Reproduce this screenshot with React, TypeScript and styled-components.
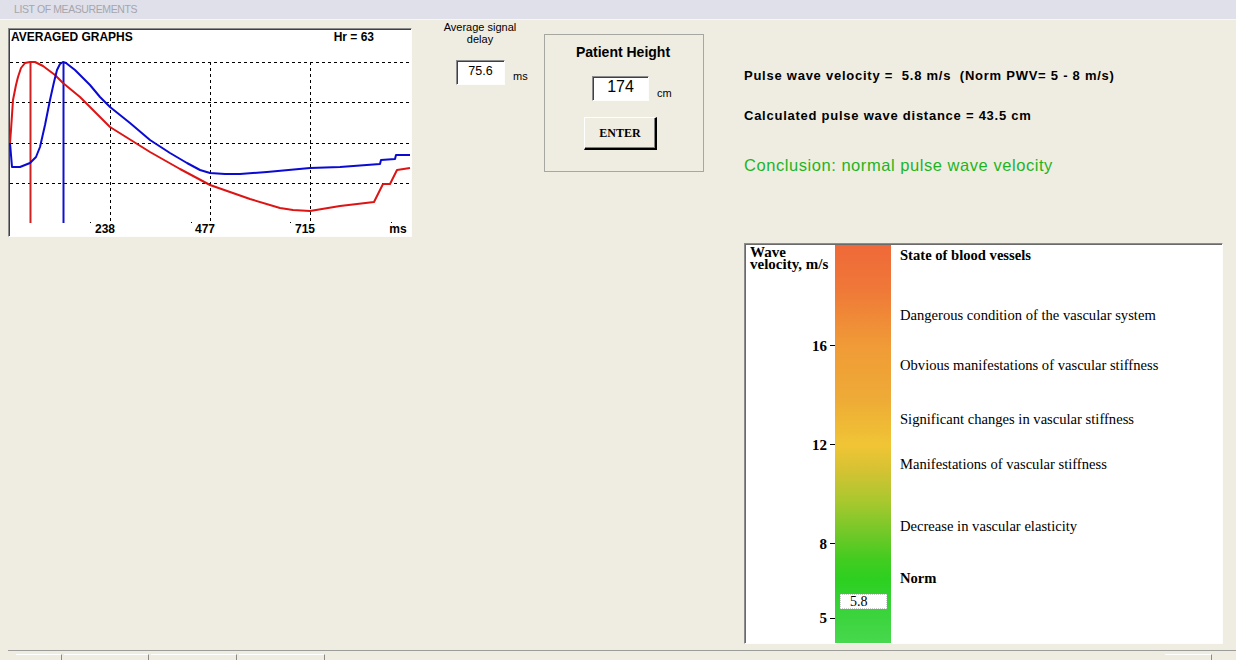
import styled, { createGlobalStyle } from "styled-components";

const GlobalStyle = createGlobalStyle`
  html, body {
    margin: 0;
    padding: 0;
  }
  body {
    background: #efede2;
    font-family: "Liberation Sans", Arial, sans-serif;
    color: #000;
    overflow: hidden;
  }
`;

const Page = styled.div`
  width: 1236px;
  height: 660px;
  display: flex;
  flex-direction: column;
`;

const TopBar = styled.div`
  flex: none;
  height: 19px;
  padding-left: 14px;
  background: #dfe0ea;
  border-bottom: 1px solid #f8f7f1;
  color: #a6a6ac;
  font-size: 10.5px;
  letter-spacing: -0.4px;
  line-height: 19px;
`;

const Main = styled.div`
  flex: 1;
  display: flex;
  align-items: flex-start;
  padding-left: 8px;
`;

/* ---------- averaged graphs ---------- */

const GraphBox = styled.div`
  margin-top: 8px;
  width: 404px;
  height: 209px;
  box-sizing: border-box;
  border-style: solid;
  border-width: 1px;
  border-color: #8c8c8c #fdfdfb #fdfdfb #8c8c8c;
  box-shadow: inset 1px 1px 0 #404040;
  background: #fff;
  display: flex;
  flex-direction: column;
  padding: 1px 0 0 1px;
`;

const GraphHeader = styled.div`
  display: flex;
  justify-content: space-between;
  height: 14px;
  padding: 0 37px 0 1px;
  font-size: 12px;
  font-weight: bold;
  line-height: 14px;
`;

const GraphSvg = styled.svg`
  display: block;
  overflow: visible;
`;

const red =
  "M10,143 L11,130 L13,100 L16,85 L18,77 L21,68 L25,63 L30,62 L35,62 L43,66 L55,75 L63,83 L80,97 L110,127 L150,152 L180,169 L210,185 L250,199 L280,208 L293,210 L310,211 L340,206 L374,202 L383,184 L390,184 L397,170 L410,168";

const blue =
  "M10,143 L12,167 L20,167 L30,163 L36,157 L40,147 L45,125 L50,100 L54,82 L57,70 L60,64 L63,62 L66,63 L75,70 L90,85 L100,97 L110,107 L130,123 L150,140 L170,153 L187,163 L200,170 L210,173 L225,174 L240,174 L267,172 L310,168 L340,167 L380,164 L381,160 L395,159 L396,155 L410,155";

const hLines = [62, 102, 143, 183];
const vLines = [110, 210, 310];
const xLabels = [
  { x: 105, t: "238" },
  { x: 205, t: "477" },
  { x: 305, t: "715" },
  { x: 398, t: "ms" },
];

const Graph = () => (
  <GraphBox>
    <GraphHeader>
      <span>AVERAGED GRAPHS</span>
      <span>Hr = 63</span>
    </GraphHeader>
    <GraphSvg width={401} height={191}>
      <g transform="translate(-10 -44)">
        {hLines.map((y) => (
          <line key={y} x1={10} x2={411} y1={y + 0.5} y2={y + 0.5} stroke="#000" strokeDasharray="3 3" />
        ))}
        {vLines.map((x) => (
          <line key={x} x1={x + 0.5} x2={x + 0.5} y1={62} y2={223} stroke="#000" strokeDasharray="3 3" />
        ))}
        {[90, 191, 290, 391].map((x) => (
          <rect key={x} x={x} y={222} width={1} height={1} fill="#000" />
        ))}
        <line x1={30.5} x2={30.5} y1={62} y2={223} stroke="#cc2222" strokeWidth={2} />
        <line x1={63.5} x2={63.5} y1={62} y2={223} stroke="#1010d0" strokeWidth={2} />
        <path d={red} fill="none" stroke="#dd1414" strokeWidth={2} strokeLinejoin="round" />
        <path d={blue} fill="none" stroke="#0a0ad2" strokeWidth={2} strokeLinejoin="round" />
        {xLabels.map((l) => (
          <text
            key={l.t}
            x={l.x}
            y={233}
            textAnchor="middle"
            fontFamily="Liberation Sans, Arial, sans-serif"
            fontSize={12}
            fontWeight="bold"
          >
            {l.t}
          </text>
        ))}
      </g>
    </GraphSvg>
  </GraphBox>
);

/* ---------- signal delay & height ---------- */

const DelayCol = styled.div`
  margin: 1px 0 0 18px;
  width: 100px;
  font-size: 11px;
`;

const Caption = styled.div`
  text-align: center;
  line-height: 12px;
`;

const FieldRow = styled.div<{ $indent: number; $top: number }>`
  display: flex;
  align-items: center;
  gap: 8px;
  margin-top: ${({ $top }) => $top}px;
  padding-left: ${({ $indent }) => $indent}px;
`;

const Field = styled.div<{ $w: number; $size: number }>`
  width: ${({ $w }) => $w}px;
  height: 25px;
  box-sizing: border-box;
  border-style: solid;
  border-width: 1px;
  border-color: #8c8c8c #fdfdfb #fdfdfb #8c8c8c;
  box-shadow: inset 1px 1px 0 #404040;
  background: #fff;
  font-size: ${({ $size }) => $size}px;
  text-align: center;
  line-height: 20px;
`;

const Unit = styled.span<{ $drop: number }>`
  font-size: 11px;
  position: relative;
  top: ${({ $drop }) => $drop}px;
`;

const HeightGroup = styled.div`
  margin: 14px 0 0 14px;
  width: 160px;
  height: 138px;
  box-sizing: border-box;
  border: 1px solid #a7a7a2;
  padding-top: 9px;
`;

const GroupTitle = styled.div`
  text-align: center;
  font-size: 14px;
  font-weight: bold;
  line-height: 16px;
  padding-right: 2px;
`;

const EnterButton = styled.button`
  display: block;
  margin: 16px 0 0 39px;
  width: 73px;
  height: 33px;
  padding: 0;
  background: #efede2;
  border-style: solid;
  border-width: 1px 2px 2px 1px;
  border-color: #fff #000 #000 #fff;
  box-shadow: inset -1px -1px 0 #808080;
  font-family: "Liberation Serif", "Times New Roman", serif;
  font-size: 12px;
  font-weight: bold;
  color: #000;
`;

/* ---------- results ---------- */

const RightCol = styled.div`
  margin: 48px 0 0 40px;
  width: 479px;
`;

const InfoLine = styled.div<{ $top: number }>`
  margin-top: ${({ $top }) => $top}px;
  font-size: 13px;
  font-weight: bold;
  letter-spacing: 0.75px;
  line-height: 16px;
  white-space: pre;
`;

const Conclusion = styled.div`
  margin-top: 31px;
  color: #1fb41f;
  font-size: 16.5px;
  letter-spacing: 0.55px;
  line-height: 20px;
`;

/* ---------- scale ---------- */

const TOP_V = 20.08;
const PX = 24.75;
const yOf = (v: number) => (TOP_V - v) * PX;

const ScalePanel = styled.div`
  margin-top: 68px;
  width: 479px;
  height: 401px;
  box-sizing: border-box;
  border-style: solid;
  border-width: 1px;
  border-color: #8c8c8c #fdfdfb #fdfdfb #8c8c8c;
  box-shadow: inset 1px 1px 0 #6a6a6a;
  padding: 1px 0 0 1px;
  background: #fff;
  display: grid;
  grid-template-columns: 89px 56px 1fr;
  font-family: "Liberation Serif", "Times New Roman", serif;
`;

const AxisCol = styled.div`
  position: relative;
`;

const AxisTitle = styled.div`
  padding: 1px 0 0 4px;
  font-size: 15px;
  font-weight: bold;
  line-height: 12px;
  white-space: nowrap;
`;

const Tick = styled.div`
  position: absolute;
  right: 0;
  display: flex;
  align-items: center;
  gap: 3px;
  height: 16px;
  margin-top: -8px;
  font-size: 15px;
  font-weight: bold;
  line-height: 16px;
`;

const TickMark = styled.span`
  width: 5px;
  height: 1px;
  background: #000;
`;

const Bar = styled.div`
  position: relative;
  background: linear-gradient(
    to bottom,
    #ef6938 0%,
    #ef7838 11%,
    #f09b37 25.4%,
    #eeab36 38.8%,
    #f0c535 50.4%,
    #d6c233 56.4%,
    #abc82f 64%,
    #78c829 71.5%,
    #42cc20 79%,
    #2dd020 84%,
    #35d235 90%,
    #48d84e 100%
  );
`;

const Marker = styled.div`
  position: absolute;
  left: 5px;
  width: 47px;
  height: 15px;
  box-sizing: border-box;
  margin-top: -7px;
  padding-left: 9px;
  background: #fff;
  border: 1px dotted #c9c9c9;
  font-family: "Liberation Serif", "Times New Roman", serif;
  font-size: 14px;
  line-height: 13px;
`;

const StateCol = styled.div`
  padding-left: 9px;
`;

const StateLabel = styled.div<{ $top: number; $bold?: boolean }>`
  margin-top: ${({ $top }) => $top}px;
  font-size: 14.6px;
  font-weight: ${({ $bold }) => ($bold ? "bold" : "normal")};
  line-height: 16px;
  white-space: nowrap;
`;

const ticks = [16, 12, 8, 5];

const states = [
  { y: 256, t: "State of blood vessels", bold: true },
  { y: 316, t: "Dangerous condition of the vascular system" },
  { y: 366, t: "Obvious manifestations of vascular stiffness" },
  { y: 420, t: "Significant changes in vascular stiffness" },
  { y: 465, t: "Manifestations of vascular stiffness" },
  { y: 527, t: "Decrease in vascular elasticity" },
  { y: 579, t: "Norm", bold: true },
];

const Scale = ({ value }: { value: number }) => {
  let prev = 246;
  return (
    <ScalePanel>
      <AxisCol>
        <AxisTitle>
          Wave
          <br />
          velocity, m/s
        </AxisTitle>
        {ticks.map((v) => (
          <Tick key={v} style={{ top: yOf(v) }}>
            {v}
            <TickMark />
          </Tick>
        ))}
      </AxisCol>
      <Bar>
        <Marker style={{ top: yOf(value) + 3 }}>{value.toFixed(1)}</Marker>
      </Bar>
      <StateCol>
        {states.map((s) => {
          const top = s.y - 8 - prev;
          prev = s.y + 8;
          return (
            <StateLabel key={s.t} $top={top} $bold={s.bold}>
              {s.t}
            </StateLabel>
          );
        })}
      </StateCol>
    </ScalePanel>
  );
};

/* ---------- bottom tabs ---------- */

const BottomBar = styled.div`
  flex: none;
  height: 6px;
  margin-left: 8px;
  border-top: 1px solid #9c9c98;
  display: flex;
  padding: 3px 22px 0 8px;
`;

const Tab = styled.div<{ $w: number }>`
  width: ${({ $w }) => $w}px;
  margin-right: 2px;
  border-top: 1px solid #fff;
  border-right: 1px solid #8a8a86;
  &:last-child {
    margin-left: auto;
  }
`;

export default function App() {
  return (
    <Page>
      <GlobalStyle />
      <TopBar>LIST OF MEASUREMENTS</TopBar>
      <Main>
        <Graph />
        <DelayCol>
          <Caption>
            Average signal
            <br />
            delay
          </Caption>
          <FieldRow $indent={26} $top={15}>
            <Field $w={49} $size={12.5}>
              75.6
            </Field>
            <Unit $drop={3}>ms</Unit>
          </FieldRow>
        </DelayCol>
        <HeightGroup>
          <GroupTitle>Patient Height</GroupTitle>
          <FieldRow $indent={47} $top={16}>
            <Field $w={57} $size={16}>
              174
            </Field>
            <Unit $drop={4}>cm</Unit>
          </FieldRow>
          <EnterButton>ENTER</EnterButton>
        </HeightGroup>
        <RightCol>
          <InfoLine $top={0}>Pulse wave velocity =  5.8 m/s  (Norm PWV= 5 - 8 m/s)</InfoLine>
          <InfoLine $top={24}>Calculated pulse wave distance = 43.5 cm</InfoLine>
          <Conclusion>Conclusion: normal pulse wave velocity</Conclusion>
          <Scale value={5.8} />
        </RightCol>
      </Main>
      <BottomBar>
        <Tab $w={45} />
        <Tab $w={84} />
        <Tab $w={85} />
        <Tab $w={85} />
        <Tab $w={46} />
      </BottomBar>
    </Page>
  );
}
